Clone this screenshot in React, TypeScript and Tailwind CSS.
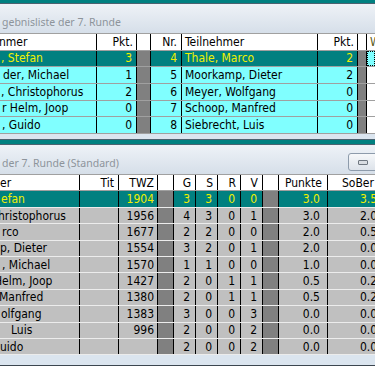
import React from "react";

const TBL = "font-['DejaVu_Sans_Condensed','DejaVu_Sans',sans-serif] text-[12px] leading-none";
const TTL = "font-['Noto_Sans',sans-serif] text-[10.5px] leading-none text-[#8d949b]";

type TopRow = { n: string; off: string; p: string; nr: string; t: string; p2: string };

const topRows: TopRow[] = [
  { n: ", Stefan", off: "ml-[1px]", p: "3", nr: "4", t: "Thale, Marco", p2: "2" },
  { n: "der, Michael", off: "ml-[3px]", p: "1", nr: "5", t: "Moorkamp, Dieter", p2: "2" },
  { n: ", Christophorus", off: "ml-[1px]", p: "2", nr: "6", t: "Meyer, Wolfgang", p2: "0" },
  { n: "r Helm, Joop", off: "ml-[2px]", p: "0", nr: "7", t: "Schoop, Manfred", p2: "0" },
  { n: ", Guido", off: "ml-[2px]", p: "0", nr: "8", t: "Siebrecht, Luis", p2: "0" },
];

type BotRow = {
  n: string;
  off: string;
  twz: string;
  g: string;
  s: string;
  r: string;
  v: string;
  pk: string;
  sb: string;
};

const botRows: BotRow[] = [
  { n: "efan", off: "ml-[1px]", twz: "1904", g: "3", s: "3", r: "0", v: "0", pk: "3.0", sb: "3.5" },
  { n: "hristophorus", off: "ml-[-2px]", twz: "1956", g: "4", s: "3", r: "0", v: "1", pk: "3.0", sb: "2.0" },
  { n: "rco", off: "ml-[2px]", twz: "1677", g: "2", s: "2", r: "0", v: "0", pk: "2.0", sb: "0.5" },
  { n: "p, Dieter", off: "ml-[0px]", twz: "1554", g: "3", s: "2", r: "0", v: "1", pk: "2.0", sb: "0.0" },
  { n: ", Michael", off: "ml-[2px]", twz: "1570", g: "1", s: "1", r: "0", v: "0", pk: "1.0", sb: "0.0" },
  { n: "Helm, Joop", off: "ml-[-6px]", twz: "1427", g: "2", s: "0", r: "1", v: "1", pk: "0.5", sb: "0.2" },
  { n: "Manfred", off: "ml-[-1px]", twz: "1380", g: "2", s: "0", r: "1", v: "1", pk: "0.5", sb: "0.2" },
  { n: "olfgang", off: "ml-[1px]", twz: "1383", g: "3", s: "0", r: "0", v: "3", pk: "0.0", sb: "0.0" },
  { n: "Luis", off: "ml-[11px]", twz: "996", g: "2", s: "0", r: "0", v: "2", pk: "0.0", sb: "0.0" },
  { n: "uido", off: "ml-[0px]", twz: "", g: "2", s: "0", r: "0", v: "2", pk: "0.0", sb: "0.0" },
];

function TitleBar({ text, button }: { text: string; button?: boolean }) {
  return (
    <div className="h-[29px] bg-gradient-to-b from-[#eef2f7] to-[#d6dfe9] flex items-center justify-between">
      <span className={`${TTL} ml-[2px] mt-[7px] whitespace-nowrap`}>{text}</span>
      {button && (
        <div className="mt-[6px] -mr-[6px] w-[33px] h-[18px] rounded-[3px] border border-[#8d9bab] bg-gradient-to-b from-[#f6f8fa] to-[#dde3ea] flex items-center justify-center">
          <div className="w-[10px] h-[5px] mr-[4px] rounded-[1px] border border-[#6f7780] bg-[#d9dde2]" />
        </div>
      )}
    </div>
  );
}

const rc = "shrink-0 border-r border-black flex items-center justify-end overflow-hidden whitespace-nowrap";
const lc = "shrink-0 border-r border-black flex items-center overflow-hidden whitespace-nowrap";

function TopTable() {
  return (
    <div className={TBL}>
      <div className="flex h-[16.67px] bg-white border-b border-[#a0a0a0] text-black">
        <div className={`${lc} w-[97px]`}><span className="ml-[-1px]">nmer</span></div>
        <div className={`${rc} w-[40px] pr-[3px]`}>Pkt.</div>
        <div className={`${rc} w-[14px]`} />
        <div className={`${rc} w-[31px] pr-[4px]`}>Nr.</div>
        <div className={`${lc} w-[136px] pl-[3px]`}>Teilnehmer</div>
        <div className={`${rc} w-[40px] pr-[3px]`}>Pkt.</div>
        <div className={`${rc} w-[9px]`} />
        <div className="flex-1 flex items-center pl-[3px] text-[#5a5a20]">W</div>
      </div>
      {topRows.map((r, i) => {
        const sel = i === 0;
        return (
          <div
            key={i}
            className={`flex h-[16.67px] border-b border-[#a0a0a0] ${sel ? "bg-[#008080] text-[#f0f000]" : "bg-[#80ffff] text-black"}`}
          >
            <div className={`${lc} w-[97px]`}><span className={r.off}>{r.n}</span></div>
            <div className={`${rc} w-[40px] pr-[4px]`}>{r.p}</div>
            <div className={`${rc} w-[14px] bg-[#808080]`} />
            <div className={`${rc} w-[31px] pr-[4px]`}>{r.nr}</div>
            <div className={`${lc} w-[136px] pl-[3px]`}>{r.t}</div>
            <div className={`${rc} w-[40px] pr-[4px]`}>{r.p2}</div>
            <div className={`${rc} w-[9px] bg-[#808080]`} />
            {sel ? (
              <div className="flex-1 bg-[#80ffff] border border-dotted border-black" />
            ) : (
              <div className="flex-1 bg-white" />
            )}
          </div>
        );
      })}
    </div>
  );
}

function BottomTable() {
  return (
    <div className={TBL}>
      <div className="flex h-[16.5px] bg-white border-b border-[#a0a0a0] text-black">
        <div className={`${lc} w-[80px]`}><span className="ml-[0px]">er</span></div>
        <div className={`${rc} w-[39px] pr-[4px]`}>Tit</div>
        <div className={`${rc} w-[39px] pr-[3px]`}>TWZ</div>
        <div className={`${rc} w-[16px]`} />
        <div className={`${rc} w-[22px] pr-[4px]`}>G</div>
        <div className={`${rc} w-[22px] pr-[4px]`}>S</div>
        <div className={`${rc} w-[23px] pr-[4px]`}>R</div>
        <div className={`${rc} w-[22px] pr-[4px]`}>V</div>
        <div className={`${rc} w-[16px]`} />
        <div className={`${rc} w-[49px] pr-[5px]`}>Punkte</div>
        <div className="flex-1 flex items-center pl-[14px] whitespace-nowrap overflow-hidden">SoBer</div>
      </div>
      {botRows.map((r, i) => {
        const sel = i === 0;
        return (
          <div
            key={i}
            className={`flex h-[16.4px] border-b border-[#ececec] ${sel ? "bg-[#008080] text-[#f0f000]" : "bg-[#c0c0c0] text-black"}`}
          >
            <div className={`${lc} w-[80px]`}><span className={r.off}>{r.n}</span></div>
            <div className={`${rc} w-[39px]`} />
            <div className={`${rc} w-[39px] pr-[3px]`}>{r.twz}</div>
            <div className={`${rc} w-[16px] bg-[#808080]`} />
            <div className={`${rc} w-[22px] pr-[5px]`}>{r.g}</div>
            <div className={`${rc} w-[22px] pr-[5px]`}>{r.s}</div>
            <div className={`${rc} w-[23px] pr-[5px]`}>{r.r}</div>
            <div className={`${rc} w-[22px] pr-[5px]`}>{r.v}</div>
            <div className={`${rc} w-[16px] bg-[#808080]`} />
            <div className={`${rc} w-[49px] pr-[7px]`}>{r.pk}</div>
            <div className="flex-1 flex items-center pl-[32px] whitespace-nowrap overflow-hidden">{r.sb}</div>
          </div>
        );
      })}
    </div>
  );
}

export default function App() {
  return (
    <div className="w-[375px] h-[366px] overflow-hidden bg-[#008080] flex flex-col">
      <div className="h-[3px] shrink-0" />
      <div className="shrink-0 bg-[#dbe5ef] border-t border-[#4b6270]">
        <TitleBar text="gebnisliste der 7. Runde" />
        <div className="border-t border-[#a0a0a0]">
          <TopTable />
        </div>
        <div className="h-[5px]" />
      </div>
      <div className="h-[5px] shrink-0 border-t border-[#4b6270]" />
      <div className="flex-1 bg-[#dbe5ef] border-t border-[#4b6270] flex flex-col">
        <TitleBar text="der 7. Runde (Standard)" button />
        <div className="border-t border-[#a0a0a0]">
          <BottomTable />
        </div>
        <div className="flex-1" />
        <div className="h-[1px] bg-[#3c4650]" />
      </div>
    </div>
  );
}
